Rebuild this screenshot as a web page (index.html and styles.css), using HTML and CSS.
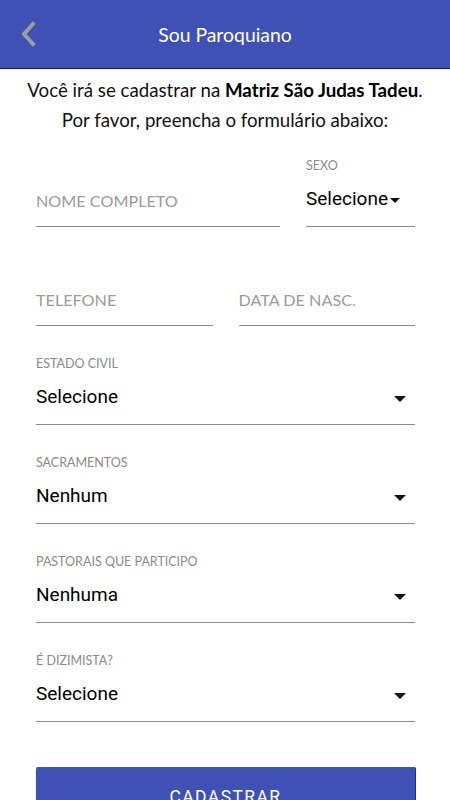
FILE: index.html
```html
<!DOCTYPE html>
<html lang="pt-BR">
<head>
<meta charset="utf-8">
<title>Sou Paroquiano</title>
<link rel="stylesheet" href="styles.css">
</head>
<body>
<header class="topbar">
  <button class="back" aria-label="Voltar">
    <svg width="20" height="26" viewBox="0 0 20 26"><polyline points="13,3 4,13 13,23" fill="none" stroke="#9e9e9e" stroke-width="4" stroke-linecap="square"/></svg>
  </button>
  <h1 class="title">Sou Paroquiano</h1>
</header>

<p class="intro">Você irá se cadastrar na <b>Matriz São Judas Tadeu</b>.<br>Por favor, preencha o formulário abaixo:</p>

<form class="form">
  <div class="row row-wide">
    <label class="field input">
      <span class="ph">NOME COMPLETO</span>
    </label>
    <div class="field">
      <span class="label">SEXO</span>
      <span class="value compact">Selecione<i class="caret"></i></span>
    </div>
  </div>

  <div class="row row-half">
    <label class="field input"><span class="ph">TELEFONE</span></label>
    <label class="field input"><span class="ph">DATA DE NASC.</span></label>
  </div>

  <div class="field">
    <span class="label">ESTADO CIVIL</span>
    <span class="value">Selecione<i class="caret"></i></span>
  </div>

  <div class="field">
    <span class="label">SACRAMENTOS</span>
    <span class="value">Nenhum<i class="caret"></i></span>
  </div>

  <div class="field">
    <span class="label">PASTORAIS QUE PARTICIPO</span>
    <span class="value">Nenhuma<i class="caret"></i></span>
  </div>

  <div class="field">
    <span class="label">É DIZIMISTA?</span>
    <span class="value">Selecione<i class="caret"></i></span>
  </div>

  <button type="button" class="submit">CADASTRAR</button>
</form>
</body>
</html>
```

FILE: styles.css
```css
* { box-sizing: border-box; }

html, body {
  margin: 0;
  padding: 0;
  background: #ffffff;
  font-family: Lato, "Open Sans", sans-serif;
  color: #000;
}

.topbar {
  height: 69px;
  background: #3f51b5;
  border-bottom: 1px solid #0a0f9c;
  display: flex;
  align-items: center;
  justify-content: center;
  position: relative;
}

.back {
  position: absolute;
  left: 20px;
  top: 21px;
  background: none;
  border: 0;
  padding: 0;
  width: 20px;
  height: 26px;
}

.back svg { display: block; }

.title {
  margin: 0;
  font-weight: 400;
  font-size: 19.4px;
  color: #fff;
}

.intro {
  margin: 0;
  padding-top: 6px;
  text-align: center;
  font-size: 18.7px;
  line-height: 30px;
  color: #111;
}

.intro b { font-weight: 700; color: #000; }

.form {
  padding: 22px 35px 0 36px;
  display: flex;
  flex-direction: column;
  gap: 29px;
}

.row {
  display: grid;
  gap: 26px;
}

.row-wide { grid-template-columns: 1fr 109px; }
.row-half { grid-template-columns: 1fr 1fr; }

.field {
  display: flex;
  flex-direction: column;
  border-bottom: 1px solid #8a8a8a;
  height: 70px;
}

.label {
  font-size: 12.5px;
  line-height: 18px;
  color: #8a8a8a;
  margin-bottom: 9px;
}

.value {
  font-family: Roboto, "Noto Sans", sans-serif;
  font-size: 19px;
  line-height: 30px;
  color: #000;
  display: flex;
  align-items: center;
  justify-content: space-between;
  padding-right: 9px;
}

.value.compact {
  justify-content: flex-start;
  padding-right: 0;
}

.caret {
  display: block;
  width: 0;
  height: 0;
  border-left: 6px solid transparent;
  border-right: 6px solid transparent;
  border-top: 6px solid #111;
  margin-top: 3px;
}

.compact .caret {
  margin-left: 2px;
  border-left-width: 5px;
  border-right-width: 5px;
  border-top-width: 5px;
}

.input {
  padding-top: 29px;
}

.ph {
  font-size: 16.2px;
  line-height: 30px;
  color: #9a9a9a;
}

.submit {
  margin-top: 16px;
  height: 60px;
  background: #3f51b5;
  color: #fff;
  border: 0;
  border-radius: 2px;
  box-shadow: 1px 0 0 #1a2aa8, 0 2px 2px rgba(0,0,0,0.2);
  font-family: Roboto, "Noto Sans", sans-serif;
  font-size: 17.5px;
  letter-spacing: 1.4px;
}
```
